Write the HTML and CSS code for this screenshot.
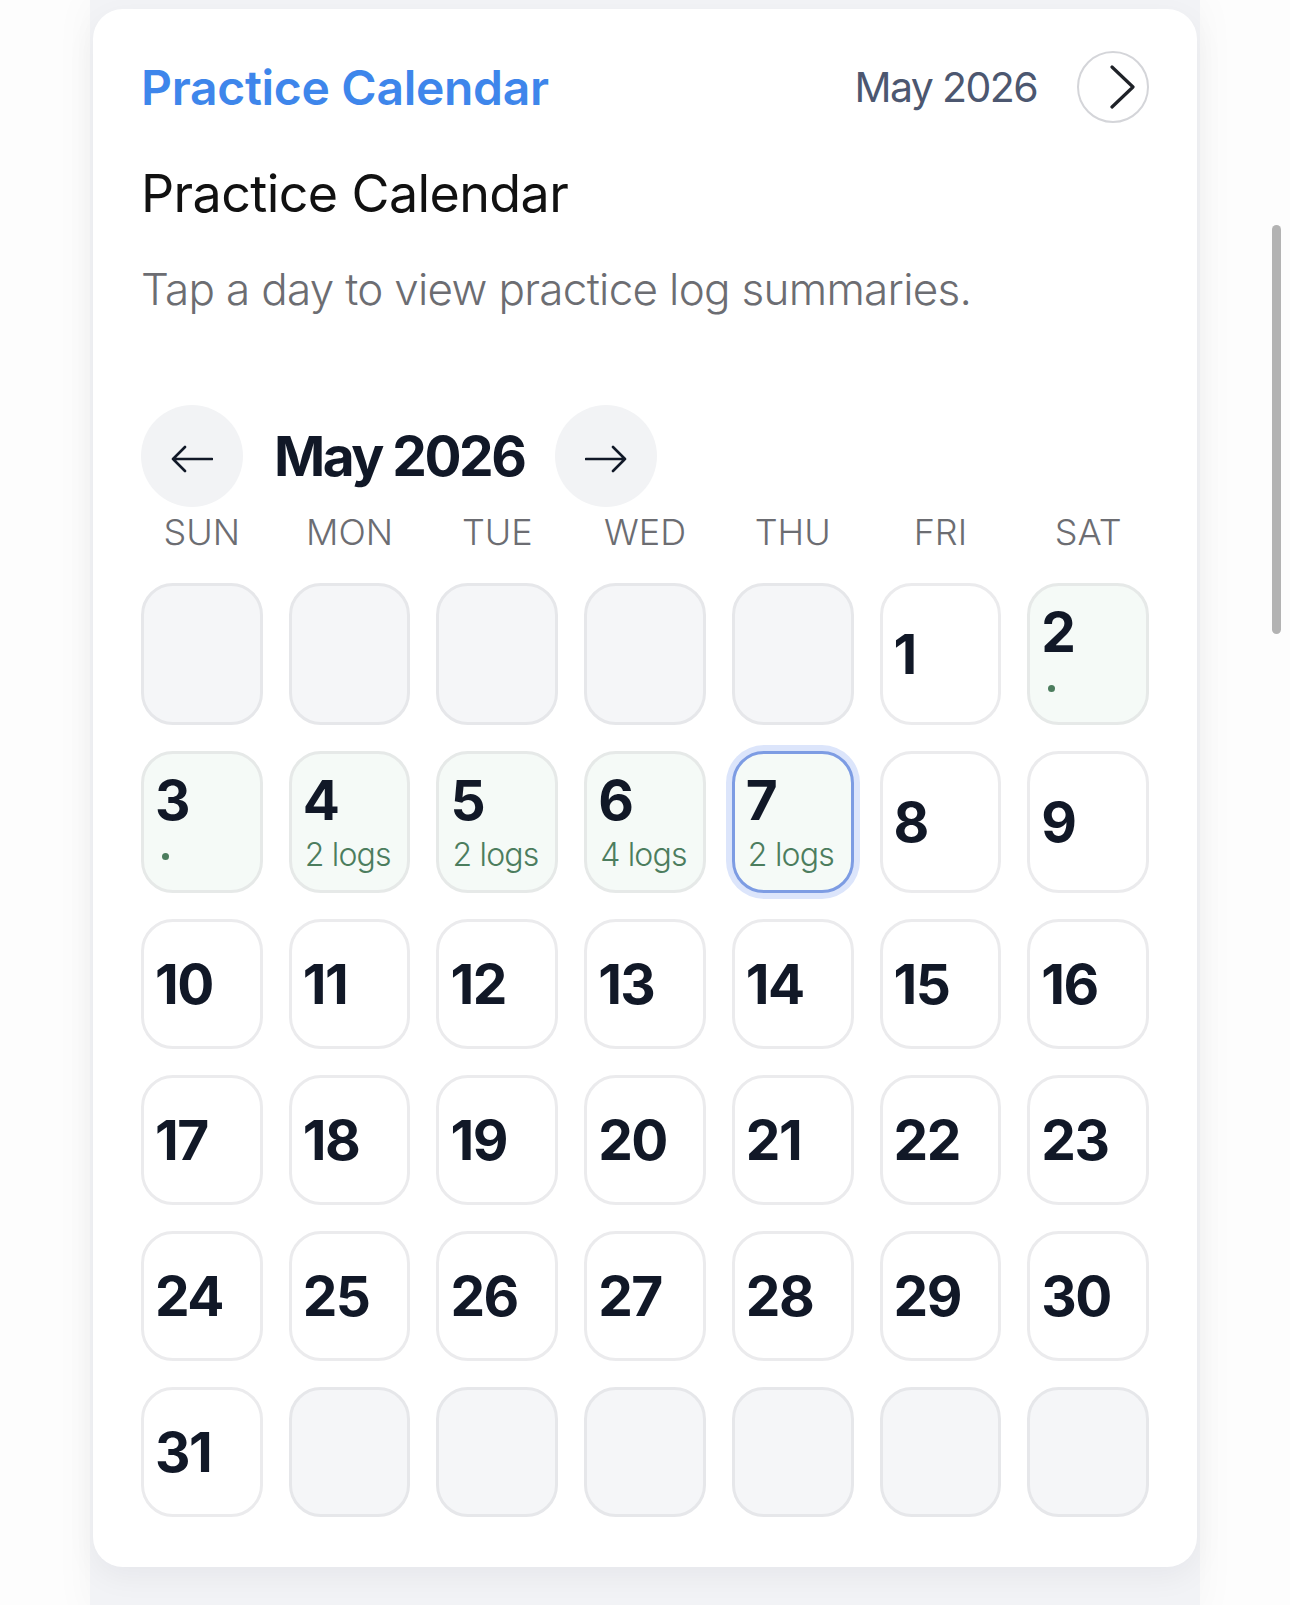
FILE: index.html
```html
<!DOCTYPE html>
<html lang="en">
<head>
    <meta charset="UTF-8">
    <meta name="viewport" content="width=device-width, initial-scale=1.0">
    <title>Practice Calendar</title>
    <link rel="stylesheet" href="styles.css">
</head>
<body>
    <div class="page">
        <section class="card">
            <header class="card-head">
                <h2 class="brand">Practice Calendar</h2>
                <div class="head-month">
                    <span>May 2026</span>
                    <button class="round-btn" aria-label="Next">
                        <svg width="26" height="44" viewBox="0 0 26 44"><path d="M2 2 L23 22 L2 42" fill="none" stroke="#1f2228" stroke-width="3.2" stroke-linecap="round" stroke-linejoin="round"/></svg>
                    </button>
                </div>
            </header>

            <h1 class="title">Practice Calendar</h1>
            <p class="lead">Tap a day to view practice log summaries.</p>

            <div class="month-nav">
                <button class="nav-btn" aria-label="Previous month">
                    <svg width="42" height="28" viewBox="0 0 42 28"><path d="M41 14 H2 M14 2 L2 14 L14 26" fill="none" stroke="#111827" stroke-width="2.6" stroke-linecap="round" stroke-linejoin="round"/></svg>
                </button>
                <h3 class="month-label">May 2026</h3>
                <button class="nav-btn" aria-label="Next month">
                    <svg width="42" height="28" viewBox="0 0 42 28"><path d="M1 14 H40 M28 2 L40 14 L28 26" fill="none" stroke="#111827" stroke-width="2.6" stroke-linecap="round" stroke-linejoin="round"/></svg>
                </button>
            </div>

            <div class="grid">
                <div class="wd">SUN</div>
                <div class="wd">MON</div>
                <div class="wd">TUE</div>
                <div class="wd">WED</div>
                <div class="wd">THU</div>
                <div class="wd">FRI</div>
                <div class="wd">SAT</div>

                <div class="day empty"></div>
                <div class="day empty"></div>
                <div class="day empty"></div>
                <div class="day empty"></div>
                <div class="day empty"></div>
                <div class="day"><span class="num">1</span></div>
                <div class="day logged"><span class="num">2</span><span class="meta"><i class="dot"></i></span></div>

                <div class="day logged"><span class="num">3</span><span class="meta"><i class="dot"></i></span></div>
                <div class="day logged"><span class="num">4</span><span class="meta">2 logs</span></div>
                <div class="day logged"><span class="num">5</span><span class="meta">2 logs</span></div>
                <div class="day logged"><span class="num">6</span><span class="meta">4 logs</span></div>
                <div class="day logged selected"><span class="num">7</span><span class="meta">2 logs</span></div>
                <div class="day"><span class="num">8</span></div>
                <div class="day"><span class="num">9</span></div>

                <div class="day"><span class="num">10</span></div>
                <div class="day"><span class="num">11</span></div>
                <div class="day"><span class="num">12</span></div>
                <div class="day"><span class="num">13</span></div>
                <div class="day"><span class="num">14</span></div>
                <div class="day"><span class="num">15</span></div>
                <div class="day"><span class="num">16</span></div>

                <div class="day"><span class="num">17</span></div>
                <div class="day"><span class="num">18</span></div>
                <div class="day"><span class="num">19</span></div>
                <div class="day"><span class="num">20</span></div>
                <div class="day"><span class="num">21</span></div>
                <div class="day"><span class="num">22</span></div>
                <div class="day"><span class="num">23</span></div>

                <div class="day"><span class="num">24</span></div>
                <div class="day"><span class="num">25</span></div>
                <div class="day"><span class="num">26</span></div>
                <div class="day"><span class="num">27</span></div>
                <div class="day"><span class="num">28</span></div>
                <div class="day"><span class="num">29</span></div>
                <div class="day"><span class="num">30</span></div>

                <div class="day"><span class="num">31</span></div>
                <div class="day empty"></div>
                <div class="day empty"></div>
                <div class="day empty"></div>
                <div class="day empty"></div>
                <div class="day empty"></div>
                <div class="day empty"></div>
            </div>
        </section>
    </div>

    <div class="scrollbar"></div>
</body>
</html>
```

FILE: styles.css
```css
body {
    font-family: Inter, "Noto Sans", sans-serif;
    color: #111827;
    background-color: #fdfdfd;
    margin: 0;
    padding: 0;
}
.page {
    width: 1104px;
    min-height: 100vh;
    margin: 0 auto;
    padding: 9px 3px 0;
    background-color: #f2f3f6;
    box-shadow: 0 0 40px rgba(17, 24, 39, 0.04);
}
.card {
    background-color: white;
    border-radius: 30px;
    box-shadow: 0 10px 30px rgba(17, 24, 39, 0.05);
    padding: 42px 48px 50px;
}
.card-head {
    display: flex;
    align-items: center;
    justify-content: space-between;
    height: 72px;
}
.brand {
    margin: 0;
    font-size: 48px;
    font-weight: 600;
    color: #3e86eb;
    letter-spacing: -0.3px;
}
.head-month {
    display: flex;
    align-items: center;
    gap: 40px;
    font-size: 41px;
    color: #4c5770;
    letter-spacing: -1.6px;
}
.round-btn {
    width: 72px;
    height: 72px;
    border: 2.5px solid #d4d5d9;
    border-radius: 50%;
    background: none;
    padding: 0 0 0 20px;
    display: flex;
    align-items: center;
    justify-content: center;
}
.title {
    margin: 40px 0 0;
    font-size: 52px;
    font-weight: 400;
    line-height: 1.2;
    color: #111;
    letter-spacing: -0.6px;
}
.lead {
    margin: 34px 0 0;
    font-size: 44px;
    line-height: 1.4;
    font-weight: 300;
    color: #6c6d72;
    letter-spacing: -0.7px;
}
.month-nav {
    display: flex;
    align-items: center;
    gap: 31px;
    margin-top: 84px;
}
.nav-btn {
    width: 102px;
    height: 102px;
    border: none;
    border-radius: 50%;
    background-color: #f2f3f5;
    padding: 6px 0 0;
    display: flex;
    align-items: center;
    justify-content: center;
}
.month-label {
    margin: 0;
    font-size: 55px;
    font-weight: 700;
    color: #111827;
    letter-spacing: -2.5px;
}
.grid {
    display: grid;
    grid-template-columns: repeat(7, 1fr);
    gap: 26px;
}
.wd {
    height: 50px;
    line-height: 50px;
    text-align: center;
    font-size: 36px;
    font-weight: 300;
    color: #6c6d72;
}
.day {
    min-height: 130px;
    box-sizing: border-box;
    border: 3px solid #ebebed;
    border-radius: 32px;
    background-color: white;
    padding: 15px 6px 13px 11px;
    display: flex;
    flex-direction: column;
    justify-content: center;
    align-items: flex-start;
}
.day.empty {
    background-color: #f5f6f8;
    border-color: #e6e7ea;
}
.day.logged {
    background-color: #f5faf7;
    border-color: #e6e9e8;
}
.day.selected {
    border-color: #7d9ce3;
    box-shadow: 0 0 0 6px #dce5fb;
}
.num {
    font-size: 55px;
    font-weight: 700;
    line-height: 63px;
    color: #111827;
    letter-spacing: -1.5px;
}
.meta {
    font-size: 32px;
    line-height: 45px;
    height: 45px;
    font-weight: 300;
    color: #4c7d5e;
    white-space: nowrap;
    letter-spacing: -0.8px;
    display: flex;
    align-items: center;
    padding-left: 2px;
}
.dot {
    width: 7px;
    height: 7px;
    border-radius: 50%;
    background-color: #4c7d5e;
    margin: 4px 0 0 5px;
}
.scrollbar {
    position: fixed;
    top: 225px;
    right: 9px;
    width: 9px;
    height: 409px;
    border-radius: 5px;
    background-color: #b3b3b3;
}
```
